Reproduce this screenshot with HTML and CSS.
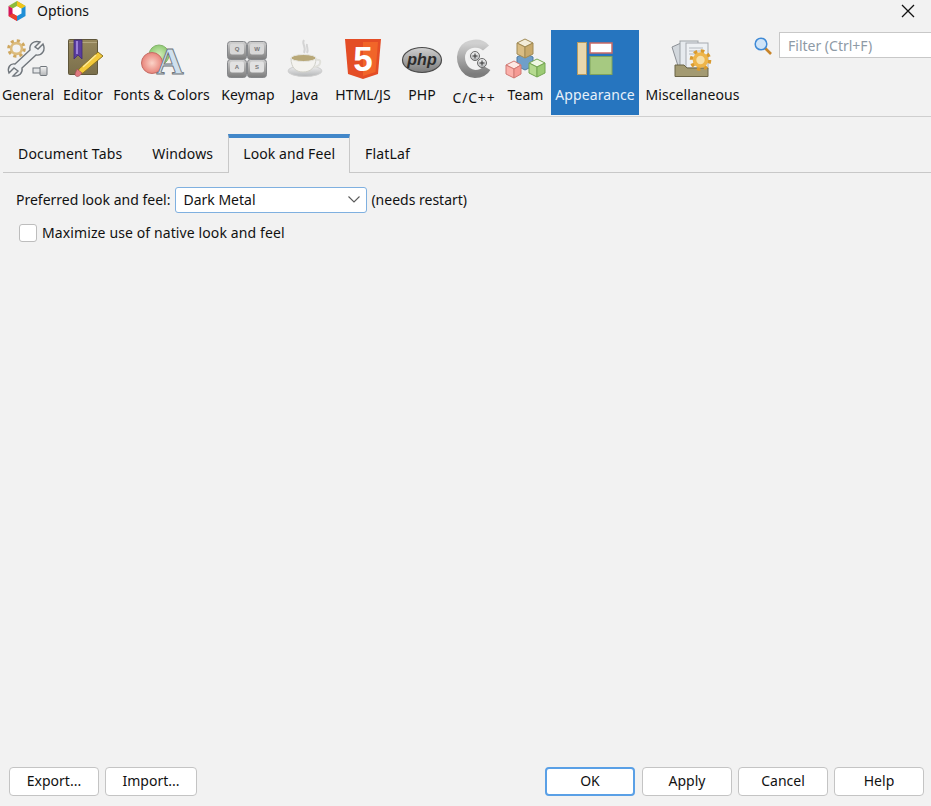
FILE: index.html
```html
<!DOCTYPE html>
<html>

<head>
    <title>Options</title>
    <link rel="stylesheet" href="styles.css">
</head>

<body>

    <svg width="0" height="0" class="defs">
        <defs>
            <linearGradient id="metal" x1="0" y1="0" x2="0" y2="1">
                <stop offset="0" stop-color="#f4f4f4" />
                <stop offset="1" stop-color="#b4b6b8" />
            </linearGradient>
            <linearGradient id="dark" x1="0" y1="0" x2="0" y2="1">
                <stop offset="0" stop-color="#d0d0d0" />
                <stop offset="1" stop-color="#7c7c7c" />
            </linearGradient>
            <linearGradient id="book" x1="0" y1="0" x2="0" y2="1">
                <stop offset="0" stop-color="#96875c" />
                <stop offset="1" stop-color="#7a6f4c" />
            </linearGradient>
            <radialGradient id="ball-red">
                <stop offset="0" stop-color="#fbd3c8" />
                <stop offset="1" stop-color="#e8847a" />
            </radialGradient>
            <radialGradient id="ball-green">
                <stop offset="0" stop-color="#d5eebd" />
                <stop offset="1" stop-color="#8fcb73" />
            </radialGradient>
        </defs>
    </svg>

    <header class="title-bar">
        <svg class="app-logo" width="20" height="20" viewBox="0 0 20 20">
            <polygon points="10,0 18.5,5 10,10 1.5,5" fill="#8dbb3c" />
            <polygon points="1.5,5 10,10 10,20 1.5,15" fill="#d4145a" />
            <polygon points="18.5,5 10,10 10,20 18.5,15" fill="#1f8fd6" />
            <polygon points="10,5 14.5,7.5 14.5,12.5 10,15 5.5,12.5 5.5,7.5" fill="#fff" />
            <polygon points="10,20 1.5,15 5.5,12.5 10,15" fill="#e8432e" />
            <polygon points="18.5,5 14.5,7.5 10,5 10,0" fill="#f0c419" />
        </svg>
        <span class="title-text">Options</span>
        <svg class="close-icon" width="14" height="14" viewBox="0 0 14 14">
            <path d="M1 1 L13 13 M13 1 L1 13" stroke="#111" stroke-width="1.3" fill="none" />
        </svg>
    </header>

    <div class="toolbar">
        <nav class="categories">
            <div class="category">
                <svg class="cat-icon" viewBox="0 0 48 48">
                    <circle cx="12.5" cy="13.5" r="7.5" fill="none" stroke="#cfa75e" stroke-width="3.6" stroke-dasharray="3 2.9" />
                    <circle cx="12.5" cy="13.5" r="5.4" fill="none" stroke="#dcbb7c" stroke-width="2.6" />
                    <path d="M39 9 L34 14 L31 12 L36 7 C30 5 25 9 26 15 L11 29 C6 28 3 33 5 38 L10 33 L14 36 L9 41 C15 42 19 38 18 33 L32 20 C38 21 42 15 39 9 Z" fill="#eef0f2" stroke="#70767c" stroke-width="1.4" />
                    <rect x="29" y="33" width="9" height="5" fill="#e4e6e8" stroke="#70767c" />
                    <rect x="36" y="31.500" width="7" height="9" rx="1" fill="url(#metal)" stroke="#70767c" />
                </svg>
                <span>General</span>
            </div>
            <div class="category">
                <svg class="cat-icon" viewBox="0 0 48 48">
                    <rect x="9.500" y="4.500" width="29" height="35" rx="1" fill="url(#book)" stroke="#5f563a" />
                    <path d="M10 7.500 H38" stroke="#b4a780" />
                    <path d="M15 5 H23 V24 L19 20 L15 24 Z" fill="#5a3d9e" stroke="#3e2878" stroke-width=".8" />
                    <path d="M17 6 H19 V19 H17 Z" fill="#9a80d6" />
                    <path d="M39 17 L44 21 L24 38 L17 40 L20 34 Z" fill="#f3c93a" stroke="#8c7420" />
                    <path d="M23 38 L18 34 L16 39 C16 42 20 43 23 38 Z" fill="#e07a80" stroke="#a05058" stroke-width=".7" />
                    <path d="M37 20 L24 32" stroke="#fbe99a" stroke-width="1.500" />
                </svg>
                <span>Editor</span>
            </div>
            <div class="category category-fonts">
                <svg class="cat-icon" viewBox="0 0 48 48">
                    <circle cx="21" cy="20" r="10" fill="url(#ball-green)" stroke="#84b46c" />
                    <circle cx="14" cy="28" r="10.500" fill="url(#ball-red)" stroke="#c66d66" />
                    <text x="32" y="39" class="glyph-a">A</text>
                </svg>
                <span>Fonts &amp; Colors</span>
            </div>
            <div class="category">
                <svg class="cat-icon" viewBox="0 0 48 48">
                    <rect x="3.500" y="6.500" width="19" height="18" rx="3" fill="url(#dark)" stroke="#85878a" />
                    <rect x="23.500" y="6.500" width="19" height="18" rx="3" fill="url(#dark)" stroke="#85878a" />
                    <rect x="3.500" y="24.500" width="19" height="18" rx="3" fill="url(#dark)" stroke="#85878a" />
                    <rect x="23.500" y="24.500" width="19" height="18" rx="3" fill="url(#dark)" stroke="#85878a" />
                    <rect x="6" y="8.500" width="14" height="11" rx="2" fill="#d8d8d8" />
                    <rect x="26" y="8.500" width="14" height="11" rx="2" fill="#d8d8d8" />
                    <rect x="6" y="26.500" width="14" height="11" rx="2" fill="#e2e2e2" />
                    <rect x="26" y="26.500" width="14" height="11" rx="2" fill="#e2e2e2" />
                    <text x="13" y="16" class="key-cap">Q</text>
                    <text x="33" y="16" class="key-cap">W</text>
                    <text x="13" y="34" class="key-cap">A</text>
                    <text x="33" y="34" class="key-cap">S</text>
                </svg>
                <span>Keymap</span>
            </div>
            <div class="category">
                <svg class="cat-icon" viewBox="0 0 48 48">
                    <path d="M23 5 C20 9 26 11 23 18 M26 9 C25 12 28 14 26 18" stroke="#d4d4d4" stroke-width="2" fill="none" />
                    <ellipse cx="24" cy="36" rx="17" ry="5.500" fill="url(#metal)" stroke="#cfcfcf" />
                    <path d="M10 23 C10 33 15 37 22 37 C29 37 35 33 35 23 Z" fill="#f4f3ef" stroke="#d0d0c8" />
                    <path d="M35 25 C41 23 41 31 33 32" fill="none" stroke="#e0e0da" stroke-width="2" />
                    <ellipse cx="22.500" cy="23" rx="12.500" ry="3.500" fill="#b8a878" stroke="#e8e8e4" />
                </svg>
                <span>Java</span>
            </div>
            <div class="category">
                <svg class="cat-icon" viewBox="0 0 48 48">
                    <polygon points="6,4 42,4 39,39 24,44 9,39" fill="#e44d26" />
                    <polygon points="24,7 39,7 36.500,37 24,41" fill="#f16529" />
                    <text x="24" y="36" class="glyph-five">5</text>
                </svg>
                <span>HTML/JS</span>
            </div>
            <div class="category">
                <svg class="cat-icon" viewBox="0 0 48 48">
                    <ellipse cx="24" cy="25" rx="19.500" ry="12.500" fill="url(#dark)" stroke="#4c4c4c" stroke-width="1.200" />
                    <text x="24" y="30" class="glyph-php">php</text>
                </svg>
                <span>PHP</span>
            </div>
            <div class="category category-low">
                <svg class="cat-icon" viewBox="0 0 48 48">
                    <path d="M36 13 C30 6 17 8 13 15 C8 24 13 38 25 39 C30 39 34 38 37 33" fill="none" stroke="url(#dark)" stroke-width="8" />
                    <path d="M29 16 C22 14 18 20 19 26" fill="none" stroke="#eee" stroke-width="2" />
                    <circle cx="25" cy="21" r="4.500" fill="url(#metal)" stroke="#6a6a6a" />
                    <circle cx="32" cy="28" r="4.500" fill="url(#metal)" stroke="#6a6a6a" />
                    <path d="M22.500 21 H27.500 M25 18.500 V23.500 M29.500 28 H34.500 M32 25.500 V30.500" stroke="#333" />
                </svg>
                <span>C/C++</span>
            </div>
            <div class="category">
                <svg class="cat-icon" viewBox="0 0 48 48">
                    <polygon points="23,18 31,22 31,31 23,35 15,31 15,22" fill="#6f9fc9" stroke="#4f7ba3" />
                    <polygon points="23,4 31,8 23,12 15,8" fill="#f3ecd8" stroke="#a08a55" />
                    <polygon points="15,8 23,12 23,23 15,19" fill="#d9bd84" stroke="#a08a55" />
                    <polygon points="31,8 23,12 23,23 31,19" fill="#c9aa6c" stroke="#a08a55" />
                    <polygon points="12,26 19,30 12,34 4,30" fill="#fde8e4" stroke="#d07a74" />
                    <polygon points="4,30 12,34 12,43 4,39" fill="#fbb0aa" stroke="#d07a74" />
                    <polygon points="19,30 12,34 12,43 19,39" fill="#f59a94" stroke="#d07a74" />
                    <polygon points="35,24 43,28 35,32 27,28" fill="#f0f8e4" stroke="#75a653" />
                    <polygon points="27,28 35,32 35,42 27,38" fill="#b6da90" stroke="#75a653" />
                    <polygon points="43,28 35,32 35,42 43,38" fill="#9ccb74" stroke="#75a653" />
                </svg>
                <span>Team</span>
            </div>
            <div class="category category-active">
                <svg class="cat-icon" viewBox="0 0 48 48">
                    <rect x="6.500" y="7.500" width="9" height="32" fill="#e8d7ad" stroke="#b59b63" />
                    <rect x="19" y="8" width="22" height="10" fill="#fff" stroke="#c96a66" stroke-width="1.500" />
                    <rect x="19" y="21.500" width="22" height="18" fill="#a6c981" stroke="#7fa35c" />
                </svg>
                <span>Appearance</span>
            </div>
            <div class="category">
                <svg class="cat-icon" viewBox="0 0 48 48">
                    <polygon points="3,12 12,8 19,32 10,34" fill="#d2d7dc" stroke="#8c9096" />
                    <rect x="11" y="6" width="18" height="27" fill="#e6eaee" stroke="#9ca1a6" />
                    <rect x="17" y="8" width="22" height="25" fill="#eef1f4" stroke="#a5aaaf" />
                    <path d="M20 13 H34 M20 16 H34 M20 19 H28" stroke="#b5bac0" />
                    <path d="M6 30 H15 L18 33 H39 V41.500 H6 Z" fill="#a39a72" stroke="#6b6446" />
                    <circle cx="31.500" cy="25" r="9" fill="none" stroke="#d99a2e" stroke-width="3.600" stroke-dasharray="3.500 3.570" />
                    <circle cx="31.500" cy="25" r="6" fill="#f6dfa8" stroke="#eeb54a" stroke-width="3.600" />
                </svg>
                <span>Miscellaneous</span>
            </div>
        </nav>
        <div class="filter">
            <svg class="search-icon" width="18" height="18" viewBox="0 0 18 18">
                <path d="M11 11 L17 17" stroke="#c8842a" stroke-width="2.600" />
                <circle cx="7" cy="7" r="5.800" fill="#cfe4f8" stroke="#3f8ad6" stroke-width="1.500" />
            </svg>
            <input class="filter-input" type="text" placeholder="Filter (Ctrl+F)">
        </div>
    </div>

    <main class="content">
        <div class="tabs">
            <div class="tab">Document Tabs</div>
            <div class="tab">Windows</div>
            <div class="tab tab-selected">Look and Feel</div>
            <div class="tab">FlatLaf</div>
        </div>

        <div class="form-row">
            <span class="row-label">Preferred look and feel:</span>
            <div class="combo">
                <span>Dark Metal</span>
                <svg width="12" height="7" viewBox="0 0 12 7">
                    <path d="M.5 .5 L6 6 L11.500 .5" fill="none" stroke="#5a5a5a" stroke-width="1.100" />
                </svg>
            </div>
            <span class="row-label">(needs restart)</span>
        </div>

        <label class="check-row">
            <span class="check-box"></span>
            <span class="check-label">Maximize use of native look and feel</span>
        </label>
    </main>

    <footer class="buttons">
        <div class="button-group">
            <button class="btn btn-export">Export...</button>
            <button class="btn btn-import">Import...</button>
        </div>
        <div class="button-group">
            <button class="btn btn-default">OK</button>
            <button class="btn">Apply</button>
            <button class="btn">Cancel</button>
            <button class="btn">Help</button>
        </div>
    </footer>

</body>

</html>
```

FILE: styles.css
```css
html,
body {
    height: 100%;
}

body {
    margin: 0;
    display: flex;
    flex-direction: column;
    overflow: hidden;
    background-color: #f2f2f2;
    color: #111;
    font-family: 'Noto Sans', sans-serif;
    font-size: 14px;
}

.defs {
    position: absolute;
}

.title-bar {
    display: flex;
    align-items: center;
    height: 22px;
    padding: 0 16px 0 7px;
}

.title-text {
    margin: -2px 0 0 10px;
}

.close-icon {
    margin-left: auto;
}

.toolbar {
    display: flex;
    height: 86px;
    padding-top: 8px;
    border-bottom: 1px solid #cfcfcf;
}

.categories {
    display: grid;
    grid-template-columns: 56px 54px 106px 64px 50px 66px 52px 52px 51px 88px 107px;
    flex-shrink: 0;
}

.category {
    display: flex;
    flex-direction: column;
    align-items: center;
    white-space: nowrap;
    line-height: 20px;
    letter-spacing: .08px;
    height: 85px;
}

.category-fonts {
    padding-right: 3px;
}

.category-low span {
    margin-top: 3px;
    letter-spacing: .8px;
}

.category-active {
    background-color: #2675bf;
    color: #e6f0fa;
}

.cat-icon {
    display: block;
    flex-shrink: 0;
    width: 48px;
    height: 48px;
    margin: 5px 0 2px;
}

.glyph-a {
    font-family: 'Liberation Serif', serif;
    font-weight: bold;
    font-size: 38px;
    text-anchor: middle;
    fill: #cfe0ee;
    stroke: #6d7378;
    stroke-width: .9px;
}

.key-cap {
    font-family: 'Liberation Sans', sans-serif;
    font-weight: bold;
    font-size: 6px;
    text-anchor: middle;
    fill: #777;
}

.glyph-five {
    font-family: 'Liberation Sans', sans-serif;
    font-weight: bold;
    font-size: 35px;
    text-anchor: middle;
    fill: #fff;
}

.glyph-php {
    font-family: 'Liberation Sans', sans-serif;
    font-weight: bold;
    font-style: italic;
    font-size: 16px;
    text-anchor: middle;
    fill: #2c2c2c;
}

.filter {
    display: flex;
    align-items: flex-start;
    flex: 1;
    gap: 7px;
    margin-left: 8px;
    min-width: 0;
}

.search-icon {
    flex-shrink: 0;
    margin-top: 7px;
}

.filter-input {
    flex: 1;
    min-width: 0;
    height: 26px;
    margin-top: 2px;
    padding: 0 8px;
    box-sizing: border-box;
    border: 1px solid #c8c8c8;
    border-right: 0;
    background-color: white;
    font-family: inherit;
    font-size: 14px;
    outline: none;
}

.filter-input::placeholder {
    color: #8e9aa6;
}

.content {
    flex: 1;
    padding: 17px 0 0 3px;
}

.tabs {
    display: flex;
    height: 39px;
    box-sizing: border-box;
    border-bottom: 1px solid #c8c8c8;
    letter-spacing: .16px;
}

.tab {
    height: 38px;
    line-height: 40px;
    padding: 0 15px;
    white-space: nowrap;
}

.tab-selected {
    height: 39px;
    box-sizing: border-box;
    padding: 0 14px;
    border-top: 4px solid #4287c9;
    border-left: 1px solid #c8c8c8;
    border-right: 1px solid #c8c8c8;
    background-color: #f2f2f2;
    line-height: 32px;
    letter-spacing: .08px;
}

.form-row {
    display: flex;
    align-items: center;
    gap: 4px;
    margin: 14px 0 0 13px;
}

.row-label {
    margin-bottom: 2px;
}

.combo {
    display: flex;
    align-items: center;
    justify-content: space-between;
    width: 192px;
    height: 26px;
    margin-left: 1px;
    box-sizing: border-box;
    padding: 0 6px 2px 7px;
    border: 1px solid #7fb0e0;
    border-radius: 3px;
    background-color: white;
}

.check-row {
    display: flex;
    align-items: center;
    gap: 5px;
    margin: 10px 0 0 16px;
}

.check-label {
    letter-spacing: .11px;
}

.check-box {
    width: 18px;
    height: 18px;
    box-sizing: border-box;
    border: 1px solid #bdbdbd;
    border-radius: 3px;
    background-color: white;
}

.buttons {
    display: flex;
    justify-content: space-between;
    padding: 0 7px 10px 9px;
}

.button-group {
    display: flex;
    gap: 6px;
}

.btn {
    width: 90px;
    height: 29px;
    padding: 0 0 2px;
    box-sizing: border-box;
    border: 1px solid #c4c4c4;
    border-radius: 4px;
    background-color: white;
    color: #111;
    font-family: inherit;
    font-size: 14px;
}

.btn-import {
    width: 92px;
}

.btn-default {
    border: 2px solid #5aa0e6;
    margin-right: 1px;
}
```
